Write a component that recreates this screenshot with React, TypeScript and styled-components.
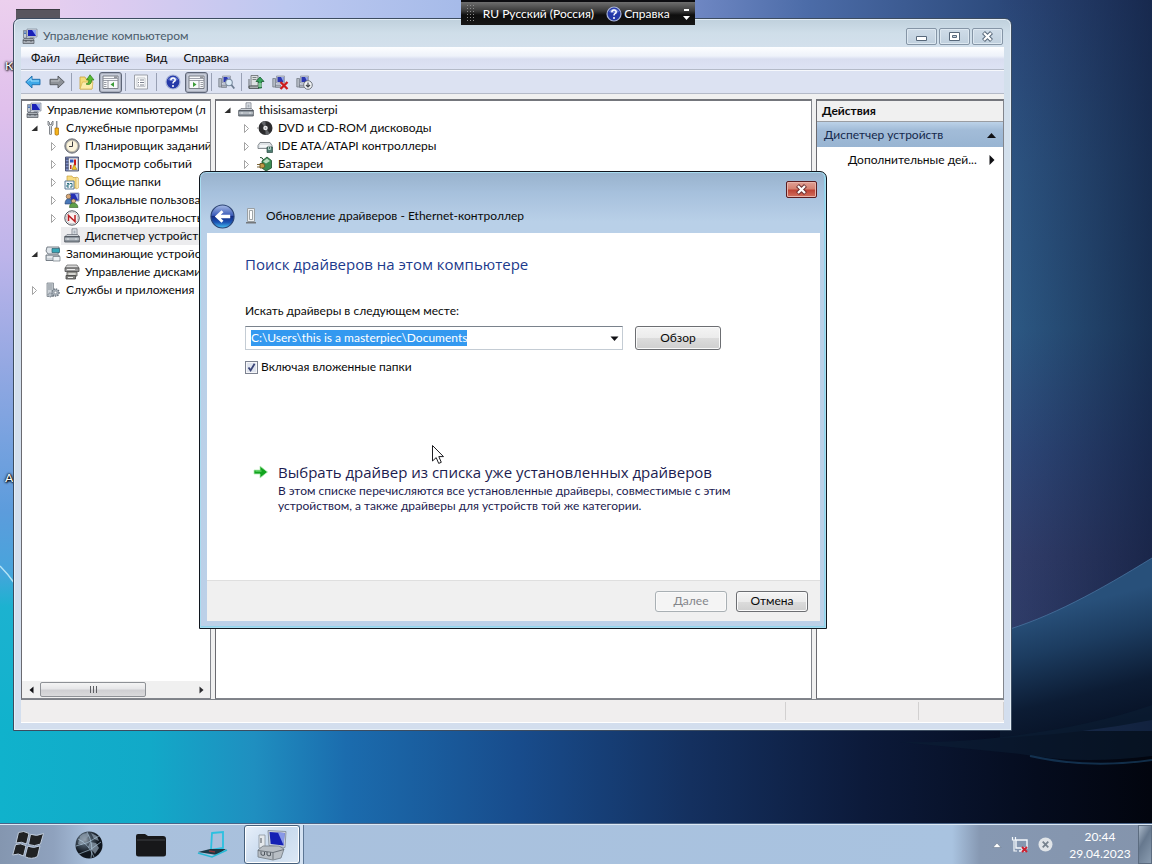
import React, { useEffect, useRef } from "react";
import styled, { createGlobalStyle, css } from "styled-components";

const GlobalStyle = createGlobalStyle`
  * { box-sizing: border-box; }
  html, body, #root { height: 100%; }
  body {
    margin: 0;
    overflow: hidden;
    font-family: Lato, "Open Sans", sans-serif;
    font-size: 12px;
    line-height: 16px;
    color: #0a0a0a;
  }
  button, input { font: inherit; color: inherit; margin: 0; }
  button { padding: 0; border: 0; background: none; }
  ul { list-style: none; margin: 0; padding: 0; }
  svg { display: block; flex: none; }
`;

/* ---------- desktop ---------- */

const Desktop = styled.div`
  position: relative;
  display: flex;
  flex-direction: column;
  justify-content: flex-end;
  height: 100vh;
  overflow: hidden;
`;

const WallpaperSvg = styled.svg`
  position: absolute;
  inset: 0;
  width: 100%;
  height: 100%;
`;

const DesktopLabel = styled.span<{ $top: number }>`
  position: absolute;
  left: 5px;
  top: ${(p) => p.$top}px;
  color: #fff;
  text-shadow: 0 0 2px #000, 1px 1px 2px #000, 0 0 3px #000;
`;

const DesktopThumb = styled.div`
  position: absolute;
  left: 16px;
  top: 9px;
  width: 44px;
  height: 20px;
  background: #58565e;
  border-top: 1px solid #3c3a42;
`;

function Wallpaper() {
  return (
    <WallpaperSvg viewBox="0 0 1152 864" preserveAspectRatio="none" aria-hidden="true">
      <defs>
        <linearGradient id="wpTop" x1="0" x2="1" y1="0" y2="0">
          <stop offset="0" stopColor="#ecd0ee" />
          <stop offset="0.1" stopColor="#dccbf0" />
          <stop offset="0.25" stopColor="#bcc8f0" />
          <stop offset="0.42" stopColor="#a3b9e8" />
          <stop offset="0.6" stopColor="#7088c4" />
          <stop offset="0.7" stopColor="#4c6ca8" />
          <stop offset="0.87" stopColor="#2c4a7c" />
          <stop offset="1" stopColor="#16264c" />
        </linearGradient>
        <linearGradient id="wpBottom" x1="0" x2="1" y1="0" y2="0">
          <stop offset="0" stopColor="#10b2cc" />
          <stop offset="0.13" stopColor="#12a9c8" />
          <stop offset="0.22" stopColor="#1f8fc0" />
          <stop offset="0.3" stopColor="#1b6cae" />
          <stop offset="0.45" stopColor="#184c8c" />
          <stop offset="0.6" stopColor="#14305f" />
          <stop offset="0.75" stopColor="#0c1a3a" />
          <stop offset="0.9" stopColor="#050c1e" />
          <stop offset="1" stopColor="#02050e" />
        </linearGradient>
        <linearGradient id="wpLeft" x1="0" x2="0" y1="0" y2="1">
          <stop offset="0" stopColor="#ecd0ee" />
          <stop offset="0.15" stopColor="#e0c0ec" />
          <stop offset="0.35" stopColor="#bdb4ea" />
          <stop offset="0.5" stopColor="#94a8e2" />
          <stop offset="0.7" stopColor="#5c9cdc" />
          <stop offset="0.78" stopColor="#48a4dc" />
          <stop offset="0.83" stopColor="#1cb2d0" />
          <stop offset="1" stopColor="#10b2cc" />
        </linearGradient>
        <linearGradient id="wpRight" x1="0" x2="0" y1="0" y2="1">
          <stop offset="0" stopColor="#2c487a" />
          <stop offset="0.22" stopColor="#2e5684" />
          <stop offset="0.45" stopColor="#2e5c88" />
          <stop offset="0.62" stopColor="#304a7c" />
          <stop offset="0.76" stopColor="#34406e" />
          <stop offset="1" stopColor="#2c3c68" />
        </linearGradient>
        <linearGradient id="wpShade" x1="0" x2="1" y1="0" y2="0">
          <stop offset="0" stopColor="#0c1836" stopOpacity="0" />
          <stop offset="1" stopColor="#0c1836" stopOpacity="0.65" />
        </linearGradient>
        <linearGradient id="wpCurve" x1="0.3" x2="0.45" y1="0.3" y2="1">
          <stop offset="0" stopColor="#28507a" />
          <stop offset="0.3" stopColor="#1c3c60" />
          <stop offset="0.7" stopColor="#0c1c34" />
          <stop offset="1" stopColor="#071226" />
        </linearGradient>
      </defs>
      <rect width="1152" height="400" fill="url(#wpTop)" />
      <rect y="700" width="1152" height="164" fill="url(#wpBottom)" />
      <rect width="60" y="0" height="731" fill="url(#wpLeft)" />
      <rect x="1000" width="152" height="731" fill="url(#wpRight)" />
      <rect x="1000" width="152" height="731" fill="url(#wpShade)" />
      <path d="M1000 632 C1050 618 1100 590 1152 558 V720 Q1080 734 1000 738 Z" fill="url(#wpCurve)" />
      <path d="M1000 632 C1050 618 1100 590 1152 558" fill="none" stroke="#4c78a4" strokeWidth="1" opacity=".7" />
      <path d="M900 742 C980 744 1080 730 1152 705 V756 Q1080 765 1020 754 Z" fill="#0c2036" opacity="0.5" />
      <path d="M1030 756 C1070 765 1110 766 1152 760" fill="none" stroke="#1d4a70" strokeWidth="2" opacity="0.6" />
      <path d="M0 566 Q8 574 15 584" fill="none" stroke="#b6e4f6" strokeWidth="1.5" />
    </WallpaperSvg>
  );
}

/* ---------- language bar ---------- */

const LangBar = styled.div`
  position: absolute;
  z-index: 3;
  left: 40%;
  top: 0;
  display: flex;
  align-items: center;
  width: 234px;
  height: 25px;
  padding: 0 4px 0 5px;
  color: #fff;
  background: linear-gradient(#6e6e6e 0, #3a3a3a 9px, #0e0e0e 13px, #161616 100%);
  border-top: 2px solid #0c0c10;
`;

const LangItem = styled.button<{ $push?: boolean }>`
  display: flex;
  align-items: center;
  gap: 2px;
  white-space: nowrap;
  margin-left: ${(p) => (p.$push ? "auto" : "0")};
`;

const LangGrip = styled.svg`
  margin-right: 8px;
`;

/* ---------- window frames ---------- */

const AppWindow = styled.main`
  position: absolute;
  z-index: 1;
  inset: 18px 140px 133px 13px;
  display: flex;
  flex-direction: column;
  padding: 0 7px 7px;
  border: 1px solid #3c4c60;
  border-radius: 7px 7px 0 0;
  background: linear-gradient(#bfd0dc 0, #cfdee9 14px, #d3e0ec 28px, #d3deee 100%);
  box-shadow: inset 0 0 0 1px #e4eef6;
`;

const TitleBar = styled.header`
  display: flex;
  align-items: center;
  height: 28px;
  padding: 6px 1px 0 1px;
  gap: 5px;
`;

const TitleText = styled.h1`
  flex: 1;
  margin: 0;
  font-size: 12px;
  line-height: 16px;
  font-weight: 400;
  color: #4b5c6b;
`;

const CaptionButtons = styled.div`
  display: flex;
  gap: 2px;
`;

const CaptionButton = styled.button<{ $danger?: boolean }>`
  display: grid;
  place-items: center;
  width: 31px;
  height: 17px;
  border: 1px solid #8595a6;
  border-radius: 2px;
  background: linear-gradient(#cfdce8, #c0d0de);
  box-shadow: inset 0 0 0 1px #dde8f1;
  ${(p) =>
    p.$danger &&
    css`
      border-color: #5a1c20;
      background: linear-gradient(#e0a095 0, #d4806f 7px, #bd4234 8px, #d2705e 100%);
      box-shadow: inset 0 0 0 1px #e8b4aa;
    `}
`;

const MenuBar = styled.nav`
  display: flex;
  align-items: center;
  gap: 16px;
  height: 23px;
  padding: 0 10px;
  background: linear-gradient(#fdfeff 0, #eef2fa 9px, #d9def0 12px, #dde3f4 100%);
  border-bottom: 1px solid #b4bac8;
`;

const ToolBar = styled.div`
  display: flex;
  align-items: center;
  gap: 1px;
  height: 24px;
  background: #dce2f2;
  border-top: 1px solid #f6f8fc;
  border-bottom: 1px solid #b4bac8;
`;

const ToolButton = styled.button<{ $pressed?: boolean }>`
  display: grid;
  place-items: center;
  width: 23px;
  height: 21px;
  border-radius: 3px;
  ${(p) =>
    p.$pressed &&
    css`
      border: 1px solid #5e6678;
      background: #c6cbd8;
      box-shadow: inset 0 0 0 1px #a8aebc;
    `}
`;

const ToolSeparator = styled.div<{ $wide?: boolean }>`
  width: ${(p) => (p.$wide ? 7 : 5)}px;
  height: 18px;
  background: linear-gradient(#98a0b4, #98a0b4) center / 1px 100% no-repeat;
`;

/* ---------- panes ---------- */

const Panes = styled.div`
  flex: 1;
  min-height: 0;
  display: grid;
  grid-template-columns: 190px minmax(0, 1fr) 188px;
  gap: 4px;
  padding-top: 5px;
  background: #f0f0f0;
`;

const Pane = styled.section`
  min-width: 0;
  display: flex;
  flex-direction: column;
  overflow: hidden;
  background: #fff;
  border: 1px solid #82858c;
  border-left-color: #6a6a70;
  border-top: 2px solid #74767c;
`;

const Tree = styled.ul`
  flex: 1;
  overflow: hidden;
`;

const TreeRow = styled.li<{ $indent: number; $selected?: boolean }>`
  display: flex;
  align-items: center;
  height: 18px;
  padding-left: ${(p) => p.$indent}px;
  white-space: nowrap;
  background: ${(p) =>
    p.$selected
      ? `linear-gradient(#ececee, #ececee) right / calc(100% - ${p.$indent + 12}px) 100% no-repeat`
      : "none"};
`;

const ArrowSlot = styled.span`
  width: 15px;
  flex: none;
`;

const RowText = styled.span`
  margin-left: 5px;
`;

const ScrollBar = styled.div`
  display: flex;
  align-items: center;
  height: 17px;
  background: #f0f0f0;
`;

const ScrollArrow = styled.button`
  display: grid;
  place-items: center;
  width: 18px;
  height: 17px;
`;

const ScrollTrack = styled.div`
  flex: 1;
  height: 15px;
`;

const ScrollThumb = styled.div`
  display: grid;
  place-items: center;
  width: 70%;
  height: 15px;
  border: 1px solid #8e9196;
  border-radius: 2px;
  background: linear-gradient(#f4f4f4 0, #e6e6e8 6px, #cfcfd2 7px, #dadadc 100%);
`;

const ActionsTitle = styled.h2`
  margin: 0;
  padding: 2px 5px;
  height: 21px;
  font-size: 12px;
  line-height: 16px;
  font-weight: 700;
  background: #f0f0f0;
  border-bottom: 1px solid #9a9da2;
`;

const ActionRow = styled.button<{ $group?: boolean }>`
  display: flex;
  align-items: center;
  justify-content: space-between;
  height: 25px;
  padding: 0 6px 0 ${(p) => (p.$group ? 7 : 31)}px;
  color: ${(p) => (p.$group ? "#14284c" : "#0a0a0a")};
  background: ${(p) => (p.$group ? "linear-gradient(#bcd2e8 0, #a2bcd8 8px, #98b4d2 100%)" : "none")};
  white-space: nowrap;
`;

const StatusBar = styled.footer`
  display: flex;
  height: 24px;
  border-top: 1px solid #7e8288;
  border-bottom: 1px solid #fff;
  background: #f0eeee;
`;

const StatusCell = styled.div<{ $width?: number }>`
  flex: ${(p) => (p.$width ? `0 0 ${p.$width}px` : "1")};
  border-right: 1px solid #d2d0d0;
  margin: 2px 0;
`;

/* ---------- dialog ---------- */

const Dialog = styled.section`
  position: absolute;
  z-index: 2;
  left: 199px;
  top: 171px;
  width: 628px;
  min-height: 458px;
  display: flex;
  flex-direction: column;
  padding: 0 6px 7px 7px;
  border: 1px solid #10161e;
  border-radius: 7px 7px 0 0;
  background: linear-gradient(#98b2cc 0, #a6c0dc 20px, #b9d0e8 50px, #bcd0e8 100%);
  box-shadow: inset 0 0 0 1px #a8dcf0, inset -1px -1px 0 1px #90d4ec;
`;

const DialogCaption = styled.div`
  display: flex;
  justify-content: flex-end;
  height: 29px;
  padding: 9px 3px 0 0;
`;

const DialogTitleRow = styled.header`
  display: flex;
  align-items: center;
  height: 32px;
  padding: 0 0 2px 3px;
`;

const DialogTitle = styled.h2`
  margin: 0 0 0 9px;
  font-size: 12px;
  line-height: 16px;
  font-weight: 400;
`;

const BackButton = styled.button`
  margin-right: 10px;
`;

const DialogBody = styled.div`
  flex: 1;
  padding: 20px 38px;
  background: #fff;
`;

const Heading = styled.h3`
  margin: 0 0 28px;
  font-family: "Open Sans", sans-serif;
  font-size: 15px;
  line-height: 22px;
  font-weight: 400;
  color: #1c3a8c;
`;

const FieldLabel = styled.label`
  display: block;
  margin-bottom: 7px;
`;

const FieldRow = styled.div`
  display: flex;
  align-items: flex-end;
  gap: 12px;
  margin-bottom: 9px;
`;

const Combo = styled.div`
  display: flex;
  align-items: center;
  width: 378px;
  height: 24px;
  border: 1px solid #c4ccd4;
  border-top-color: #7a828c;
  background: #fff;
`;

const ComboInput = styled.input`
  flex: 1;
  min-width: 0;
  height: 16px;
  padding: 0 0 0 5px;
  border: 0;
  outline: 0;
  background: transparent;
  &::selection { background: #3399f0; color: #fff; }
`;

const ComboButton = styled.button`
  display: grid;
  place-items: center;
  width: 16px;
  height: 20px;
`;

const PushButton = styled.button<{ $width: number; $height: number }>`
  width: ${(p) => p.$width}px;
  height: ${(p) => p.$height}px;
  border: 1px solid #6c6e72;
  border-radius: 3px;
  background: linear-gradient(#f4f4f4 0, #ebebeb 50%, #dcdcdc 51%, #cfcfcf 100%);
  box-shadow: inset 0 0 0 1px #fafafa;
  &:disabled {
    color: #83858a;
    border-color: #a9b0b4;
    background: #f4f4f4;
  }
`;

const CheckLabel = styled.label`
  display: flex;
  align-items: center;
  gap: 3px;
`;

const CheckBox = styled.input`
  appearance: none;
  width: 13px;
  height: 13px;
  border: 1px solid #7c8290;
  background: #e4e8f0;
  box-shadow: inset 0 0 0 1px #f6f6f8;
  &:checked {
    background: #dfe4ee
      url("data:image/svg+xml,%3Csvg xmlns='http://www.w3.org/2000/svg' viewBox='0 0 11 11'%3E%3Cpath d='M2.5 5.5 L4.6 8.4 L8.6 1.8' fill='none' stroke='%233a4478' stroke-width='1.8'/%3E%3C/svg%3E")
      center / 11px 11px no-repeat;
  }
`;

const CommandLink = styled.button`
  display: flex;
  gap: 9px;
  margin: 86px 0 0 8px;
  text-align: left;
  color: #1c1c50;
`;

const CommandTitle = styled.span`
  display: block;
  font-family: "Open Sans", sans-serif;
  font-size: 15px;
  line-height: 22px;
`;

const CommandText = styled.span`
  display: block;
  max-width: 470px;
  line-height: 15px;
`;

const CommandIcon = styled.span`
  padding-top: 4px;
`;

const DialogFooter = styled.footer`
  display: flex;
  align-items: center;
  justify-content: flex-end;
  gap: 9px;
  height: 41px;
  padding-right: 12px;
  background: #f0f0f0;
  border-top: 1px solid #dfdfdf;
`;

/* ---------- taskbar ---------- */

const Taskbar = styled.footer`
  position: relative;
  display: flex;
  align-items: stretch;
  height: 40px;
  border-top: 1px solid #dce8f4;
  box-shadow: 0 -1px 0 #4a6488;
  background: linear-gradient(90deg, #8496b0 0, #8fa2be 54px, #a9c0dc 90px, #a9c3e0 calc(100% - 200px), #8698b2 calc(100% - 172px), #8494ac 100%);
`;

const TaskButton = styled.button<{ $width: number; $active?: boolean }>`
  display: grid;
  place-items: center;
  width: ${(p) => p.$width}px;
  ${(p) =>
    p.$active &&
    css`
      border: 1px solid #46607c;
      border-radius: 3px;
      background: linear-gradient(135deg, #e8f0fa, #c8daee 50%, #dce8f5);
      box-shadow: inset 0 0 0 1px #fff;
    `}
`;

const StackEdge = styled.span`
  width: 4px;
  border-right: 1px solid #5c7694;
  background: #d4e2f2;
`;

const Tray = styled.div`
  display: flex;
  align-items: center;
  gap: 9px;
  margin-left: auto;
`;

const TrayButton = styled.button`
  display: block;
`;

const Clock = styled.time`
  width: 76px;
  text-align: center;
  line-height: 17px;
  color: #fff;
`;

const ShowDesktop = styled.button`
  width: 14px;
  border: 1px solid #5c6c80;
  background: linear-gradient(120deg, #aab8c8, #66788e 40%, #8a9cb0);
`;

/* ---------- icons ---------- */

const ComputerIcon = ({ size = 16 }: { size?: number }) => (
  <svg width={size} height={size} viewBox="0 0 16 16">
    <path d="M5 1h10v8H5z" fill="#d4d8e0" stroke="#7c869a" strokeWidth=".7" />
    <path d="M6 2h8v6H6z" fill="#1820b8" />
    <path d="M10 2h4v6z" fill="#8ea4f0" />
    <path d="M1.5 2.5h3V10h-3z" fill="#c4cad4" stroke="#6a7280" strokeWidth=".7" />
    <path d="M2 4h2M2 5.500h2" stroke="#2a60b0" strokeWidth=".8" />
    <path d="M8 9h4l1 2H7z" fill="#9aa2ae" />
    <path d="M2 10.500h9l1 1.500v3.500H1V12z" fill="#a8aeb6" stroke="#50565e" strokeWidth=".7" />
    <path d="M1 12.500h11M4 12v2M9 12v2" stroke="#50565e" strokeWidth=".8" />
  </svg>
);

const ToolsIcon = () => (
  <svg width="16" height="16" viewBox="0 0 16 16">
    <path d="M3 1v4l1.500 1.500V14q1 2 2 0V6.500L8 5V1L6.600 2.500v2H4.500v-2z" fill="#d4d8dc" stroke="#6a6e74" strokeWidth=".8" />
    <path d="M11.700 1v7" stroke="#8a8e94" strokeWidth="1.500" />
    <path d="M10 8h3.500v6.500q-1.700 1.500-3.500 0z" fill="#f4b41c" stroke="#a86c08" strokeWidth=".7" />
  </svg>
);

const ClockIcon = () => (
  <svg width="16" height="16" viewBox="0 0 16 16">
    <circle cx="8" cy="8" r="7.200" fill="#9a9ca0" stroke="#5c5e64" strokeWidth=".8" />
    <circle cx="8" cy="8" r="5.600" fill="#fbf4dc" stroke="#c8c0a4" strokeWidth=".5" />
    <path d="M8.500 3.500V8.500H5" fill="none" stroke="#3c3c40" />
  </svg>
);

const EventIcon = () => (
  <svg width="16" height="16" viewBox="0 0 16 16">
    <path d="M1.500 1h13v14h-13z" fill="#8090c8" stroke="#39405c" strokeWidth=".8" />
    <path d="M4.500 2h9.500v12.500H4.500z" fill="#f0f0f4" stroke="#6c7084" strokeWidth=".6" />
    <path d="M1.500 3h3M1.500 6h3M1.500 9h3M1.500 12h3" stroke="#303858" />
    <path d="M6 3.500h3.500v3H6z" fill="#3058c0" />
    <path d="M11 3.500v6" stroke="#cc1c18" strokeWidth="2" />
    <path d="M8 13.500l2-5 3 5z" fill="#f4c41c" stroke="#8a6a10" strokeWidth=".5" />
    <path d="M6 9h1.500v4H6z" fill="#c03020" />
  </svg>
);

const SharedFolderIcon = () => (
  <svg width="16" height="16" viewBox="0 0 16 16">
    <path d="M3 2h5l1 1.500h4.500V14H3z" fill="#f8dc80" stroke="#c8a040" strokeWidth=".7" />
    <path d="M12 3l2.500 1V14l-2.500 1z" fill="#fceab0" stroke="#c8a040" strokeWidth=".5" />
    <path d="M1 7h9v8H1z" fill="#f0f4f8" stroke="#4c7090" strokeWidth=".9" />
    <path d="M3 9.500h2v1.500H3v2h2M6 9.500h2v3.500H6" fill="none" stroke="#2a7080" />
  </svg>
);

const UsersIcon = () => (
  <svg width="16" height="16" viewBox="0 0 16 16">
    <path d="M6 1h9v8H6z" fill="#2430b4" stroke="#a0a8bc" />
    <path d="M11 2h3v6z" fill="#98acf0" />
    <circle cx="4.500" cy="4.500" r="2.300" fill="#d8a878" stroke="#5c4830" strokeWidth=".6" />
    <path d="M1 12q0-5 3.500-5T8 12z" fill="#4878b8" stroke="#28406c" strokeWidth=".6" />
    <circle cx="9.500" cy="9" r="2.100" fill="#e0b488" stroke="#5c4830" strokeWidth=".6" />
    <path d="M5.500 15.500q0-4.500 4-4.500t4.500 4.500z" fill="#60a048" stroke="#305c24" strokeWidth=".6" />
  </svg>
);

const PerfIcon = () => (
  <svg width="16" height="16" viewBox="0 0 16 16">
    <circle cx="8" cy="8" r="7.200" fill="#fff" stroke="#4c5058" strokeWidth="1" />
    <circle cx="8" cy="8" r="5.800" fill="#fbf0f0" stroke="#a8acb0" strokeWidth=".6" />
    <path d="M4.500 11V5.500L11 11.500V5" fill="none" stroke="#b81c20" strokeWidth="1.500" />
  </svg>
);

const DeviceIcon = () => (
  <svg width="16" height="16" viewBox="0 0 16 16">
    <path d="M8 .8h5V7H8z" fill="#e4e8ec" stroke="#7c828a" strokeWidth=".8" />
    <path d="M9.500 2.500h2v3h-2z" fill="#a8b0ba" />
    <path d="M1 8.500l2-2h10.500l2 2z" fill="#cdd2d8" stroke="#6a7078" strokeWidth=".7" />
    <path d="M.7 8.500h14.600V14H.7z" fill="#8d959e" stroke="#484e56" strokeWidth=".8" />
    <path d="M1 11h14M4 10v2M12 10v2" stroke="#dde2e6" />
  </svg>
);

const StorageIcon = () => (
  <svg width="16" height="16" viewBox="0 0 16 16">
    <path d="M2 1h12v4l-1 3H3L1 5z" fill="#dfe5ea" stroke="#5c656e" strokeWidth=".8" />
    <path d="M7 2.500h7.500v4H7z" fill="#38a8b8" stroke="#2a6070" strokeWidth=".7" />
    <path d="M1 9h13v5.500H1z" fill="#c9d0d6" stroke="#5c656e" strokeWidth=".8" />
    <path d="M2 11h6" stroke="#fff" />
    <path d="M8 10.500h7v4.500H8z" fill="#eef2f5" stroke="#6c757e" strokeWidth=".7" />
  </svg>
);

const DisksIcon = () => (
  <svg width="16" height="16" viewBox="0 0 16 16">
    <path d="M3 1h10l2 3H1z" fill="#d8d8d8" stroke="#5c5c5c" strokeWidth=".7" />
    <path d="M1 4h14v3.500H1z" fill="#9c9c9c" stroke="#4c4c4c" strokeWidth=".8" />
    <path d="M3 8h10v4H3z" fill="#c0c0b8" stroke="#4c4c4c" strokeWidth=".8" />
    <path d="M2 11.500h9.500V15H2z" fill="#80807c" stroke="#444" strokeWidth=".8" />
    <path d="M3 5.500h8M5 10h6M4 13.500h5" stroke="#ececec" />
  </svg>
);

const ServicesIcon = () => (
  <svg width="16" height="16" viewBox="0 0 16 16">
    <path d="M2 1h6.500v13.500H2z" fill="#ccd2d8" stroke="#7c848c" strokeWidth=".8" />
    <path d="M3 3h4.500M3 5h4.500M3 7h4.500" stroke="#7c848c" strokeWidth=".8" />
    <circle cx="10.500" cy="10.500" r="3.600" fill="#a8b0b8" stroke="#6c7680" strokeDasharray="1.400 1" strokeWidth="1.400" />
    <circle cx="10.500" cy="10.500" r="1.300" fill="#fff" stroke="#6c7680" strokeWidth=".5" />
    <circle cx="5" cy="13" r="2" fill="#b8c0c8" stroke="#6c7680" strokeDasharray="1 .8" />
  </svg>
);

const DiscIcon = () => (
  <svg width="16" height="16" viewBox="0 0 16 16">
    <path d="M0 8h1" stroke="#888" />
    <circle cx="8.500" cy="8" r="7" fill="#2c2c2e" />
    <path d="M8.500 8L4 2.600A7 7 0 0 1 8.500 1zM8.500 8l4.500 5.400A7 7 0 0 1 8.500 15z" fill="#626468" />
    <circle cx="8.500" cy="8" r="2.300" fill="#e8e8ea" />
    <circle cx="8.500" cy="8" r=".8" fill="#8c8c90" />
  </svg>
);

const IdeIcon = () => (
  <svg width="16" height="16" viewBox="0 0 16 16">
    <path d="M3 4.500h10l2 3v3H1v-3z" fill="#dfe3e6" stroke="#7c8288" strokeWidth=".9" />
    <path d="M3 8h8" stroke="#fff" strokeWidth="1.400" />
    <path d="M10 9h5.500v5.500H10z" fill="#4e7c70" stroke="#2c4c44" strokeWidth=".7" />
    <path d="M11.500 9v2.500h2V9" fill="none" stroke="#c8e0d8" strokeWidth=".8" />
  </svg>
);

const BatteryIcon = () => (
  <svg width="16" height="16" viewBox="0 0 16 16">
    <path d="M5 5l5-4 4.500 3.500V12L9 15l-4-3z" fill="#3c8c54" stroke="#1c4c2c" strokeWidth=".8" />
    <path d="M6 5.500l4-3 3 2.500-4 2.500z" fill="#b8dcc0" />
    <path d="M3 1.500Q5.500 1 6.500 4" fill="none" stroke="#1c4c2c" />
    <path d="M0 8.500h3M0 11h3M3 7.500h3.500l1.500 2.500-1.500 2H3z" fill="#c09a48" stroke="#6c5420" strokeWidth=".9" />
  </svg>
);

const ArrowIcon = ({ forward }: { forward?: boolean }) => (
  <svg width="16" height="16" viewBox="0 0 16 16">
    <path
      d={forward ? "M15.300 8L9 2v3.300H1v5.400h8V14z" : "M.7 8L7 2v3.300h8v5.400H7V14z"}
      fill={forward ? "#8e9298" : "#3ca8e8"}
      stroke={forward ? "#54585e" : "#1c6cac"}
      strokeWidth=".9"
    />
    <path d={forward ? "M2 7h8V4.500" : "M14 7H6V4.500L3 7.500"} fill="none" stroke={forward ? "#bcc0c4" : "#a4e0fc"} />
  </svg>
);

const UpFolderIcon = () => (
  <svg width="16" height="16" viewBox="0 0 16 16">
    <path d="M1 3h5l1 2h6v10H1z" fill="#f6dc7c" stroke="#c8a23c" strokeWidth=".8" />
    <path d="M1 15L3.500 8H14l-1 7z" fill="#fcecac" stroke="#d0ac48" strokeWidth=".6" />
    <path d="M7 10q3 0 3-4H7.500L11 .8 15 6h-2.500q0 6-5.500 4z" fill="#58bc34" stroke="#2c7c18" strokeWidth=".7" />
  </svg>
);

const PaneIcon = ({ right }: { right?: boolean }) => (
  <svg width="17" height="16" viewBox="0 0 17 16">
    <path d="M1 2h15v12.500H1z" fill="#f8f9fb" stroke="#70747e" strokeWidth=".9" />
    <path d="M1 4.500h15M1 6.500h15" stroke="#888c98" strokeWidth=".8" />
    <path d="M12 3.200h3" stroke="#40444e" strokeWidth=".8" />
    {right ? (
      <>
        <path d="M11 6.500v8M12.500 8.500h2.500M12.500 10.500h2.500M12.500 12.500h2.500" stroke="#80848e" strokeWidth=".8" />
        <path d="M5 8l3.500 2.500L5 13z" fill="#3c9c38" />
      </>
    ) : (
      <>
        <path d="M6 6.500v8M2 8.500h2.500M2 10.500h2.500M2 12.500h2.500" stroke="#80848e" strokeWidth=".8" />
        <path d="M12 8l-3.500 2.500L12 13z" fill="#3c9c38" />
      </>
    )}
  </svg>
);

const ListIcon = () => (
  <svg width="16" height="16" viewBox="0 0 16 16">
    <path d="M1.500 1h13v14h-13z" fill="#f6f7f9" stroke="#9498a2" strokeWidth=".9" />
    <path d="M4 4h8v8.500H4z" fill="#fff" stroke="#b0b4bc" strokeWidth=".7" />
    <path d="M5 6h1M5 8.500h1M5 11h1M7 6h4M7 8.500h4M7 11h4" stroke="#6c7280" strokeWidth=".9" />
  </svg>
);

const HelpIcon = () => (
  <svg width="16" height="16" viewBox="0 0 16 16">
    <circle cx="8" cy="8" r="7" fill="#2438a8" stroke="#a8b4d8" strokeWidth="1.200" />
    <path d="M3 6a5.500 5.500 0 0 1 10 0q-5 2-10 0z" fill="#6478d0" />
    <path d="M5.800 6.200Q6 4 8 4t2.200 1.900Q10.200 7 8.900 7.700 8 8.200 8 9.600" fill="none" stroke="#fff" strokeWidth="1.500" />
    <circle cx="8" cy="11.900" r="1" fill="#fff" />
  </svg>
);

const ScanIcon = ({ badge }: { badge?: "cross" | "down" }) => (
  <svg width="17" height="16" viewBox="0 0 17 16">
    <path d="M4.500 2h8v7h-8z" fill="#c8ccd8" stroke="#888e9c" strokeWidth=".7" />
    <path d="M5.500 3h6v5h-6z" fill="#2c38b0" />
    <path d="M9 3h2.500v5z" fill="#98a8e8" />
    <path d="M.8 4.500h2.700V13H.8z" fill="#b4bac4" stroke="#6c727e" strokeWidth=".7" />
    <path d="M3.500 11h5v2.500h-5z" fill="#a8aeb8" stroke="#6c727e" strokeWidth=".6" />
    {badge === "cross" && <path d="M8.500 8l7 7M15.500 8l-7 7" stroke="#cc1c1c" strokeWidth="2.300" />}
    {badge === "down" && (
      <>
        <circle cx="12" cy="11" r="4.300" fill="#f0f2f4" stroke="#70767e" />
        <path d="M12 8.500v4M10 11l2 2 2-2" fill="none" stroke="#44484e" strokeWidth="1.200" />
      </>
    )}
    {!badge && (
      <>
        <circle cx="11" cy="8.500" r="3.300" fill="#dcecf8" stroke="#7c8ca0" strokeWidth="1.100" />
        <path d="M13.500 11l2.800 3.500" stroke="#6c7c90" strokeWidth="1.800" />
      </>
    )}
  </svg>
);

const UpdateIcon = () => (
  <svg width="17" height="16" viewBox="0 0 17 16">
    <path d="M3 1.500h7V12H3z" fill="#dce0e2" stroke="#646a6c" strokeWidth=".8" />
    <path d="M4.500 3.500h4M4.500 5.500h4" stroke="#646a6c" strokeWidth=".8" />
    <path d="M1 12h10v2.500H1zM1 5v9" fill="#a8aeb0" stroke="#54595c" strokeWidth=".9" />
    <path d="M10.500 14V7.500H8L12 3l4 4.500h-2.500V14z" fill="#38a45c" stroke="#185c30" strokeWidth=".8" />
    <path d="M10 10h4M10 12h4" stroke="#d4ecd8" strokeWidth=".9" />
  </svg>
);

const TreeArrow = ({ open }: { open: boolean }) => (
  <svg width="9" height="10" viewBox="0 0 9 10">
    {open ? (
      <path d="M7.500 2.500v5.500H1.500z" fill="#2c2c2c" />
    ) : (
      <path d="M2.500 1.500l4 4-4 4z" fill="#fff" stroke="#9a9a9a" strokeWidth=".9" />
    )}
  </svg>
);

const CloseGlyph = ({ stroke }: { stroke: string }) => (
  <svg width="13" height="11" viewBox="0 0 13 11">
    <path d="M2.500 1.500l8 8M10.500 1.500l-8 8" stroke={stroke} strokeWidth="4.200" />
    <path d="M3 2l7 7M10 2l-7 7" stroke="#fff" strokeWidth="2.200" />
  </svg>
);

const Triangle = ({ dir }: { dir: "up" | "down" | "left" | "right" }) => {
  const d = {
    up: "M1 8l4.500-5L10 8z",
    down: "M1.500 3.500h8L5.500 8z",
    left: "M7.500 1.500v7L3.500 5z",
    right: "M3.500 0l5 5-5 5z",
  }[dir];
  return (
    <svg width="11" height="10" viewBox="0 0 11 10">
      <path d={d} fill="#101014" />
    </svg>
  );
};

const BackIcon = () => (
  <svg width="25" height="25" viewBox="0 0 26 26">
    <defs>
      <linearGradient id="backFill" x1="0" x2="0" y1="0" y2="1">
        <stop offset="0" stopColor="#a8bce8" />
        <stop offset="0.45" stopColor="#3c5cb8" />
        <stop offset="0.5" stopColor="#142c84" />
        <stop offset="0.75" stopColor="#1c54b4" />
        <stop offset="1" stopColor="#48c4f4" />
      </linearGradient>
    </defs>
    <circle cx="13" cy="13" r="12" fill="url(#backFill)" stroke="#2c4474" strokeWidth="1.200" />
    <path d="M5 13l7-6.500 2 2-2.800 2.800H21v3.400h-9.800l2.800 2.800-2 2z" fill="#fff" />
  </svg>
);

const NicIcon = () => (
  <svg width="12" height="18" viewBox="0 0 12 18">
    <path d="M2.500 1.500h7v13h-7z" fill="#eceff0" stroke="#9aa0a4" />
    <path d="M4.500 3.500h3v9h-3z" fill="#fff" stroke="#8a9094" strokeWidth=".8" />
    <path d="M1 15h10v1.500H1z" fill="#74787c" />
  </svg>
);

const GreenArrow = () => (
  <svg width="16" height="14" viewBox="0 0 16 14">
    <path d="M1 5h6V1L14.500 7 7 13V9H1z" fill="#12a41e" stroke="#b8ecb8" strokeWidth=".8" />
    <path d="M2.500 6h6" stroke="#80e484" />
  </svg>
);

const WindowsLogo = () => (
  <svg width="34" height="30" viewBox="0 0 34 30">
    <g fill="#202224" stroke="#c0ccdc" strokeWidth="1">
      <path d="M6.500 2.500q5-2.500 10.500 1L14.500 14q-5-3-10.500-1z" />
      <path d="M18.500 4.300q6 2.500 13-.8L28.500 14q-6 3-12 .5z" />
      <path d="M3.500 14.700q5-2.200 10.500 1L11.500 26q-5-3.500-10.800-1z" />
      <path d="M15.700 16.200q6 2.500 12.300-.3L25.500 26.500q-6 3.500-12.500.2z" />
    </g>
  </svg>
);

const GlobeIcon = () => (
  <svg width="30" height="30" viewBox="0 0 30 30">
    <defs>
      <radialGradient id="globeFill" cx=".35" cy=".3">
        <stop offset="0" stopColor="#98a4b0" />
        <stop offset=".45" stopColor="#465462" />
        <stop offset="1" stopColor="#10161e" />
      </radialGradient>
    </defs>
    <circle cx="15" cy="15" r="13.500" fill="url(#globeFill)" />
    <path d="M6 6q3-3 7-3l2 3-4 4-3 5-4-1zM17 3l6 3 2 5-5-2zM16 12l6 1 3 5-4 6-3-4-4-3z" fill="#8c9cac" opacity=".75" />
    <path d="M2 16q12-2 23-10M5 24q12-3 22-12M13 2q7 12 4 26M4 9q10 4 16 18" fill="none" stroke="#b8d4e8" strokeWidth=".6" />
  </svg>
);

const FolderIcon = () => (
  <svg width="32" height="26" viewBox="0 0 32 26">
    <path d="M1 4q0-2 2-2h7l3 2h15q3 0 3 3v15q0 2.500-2.500 2.500h-25Q1 24.500 1 22z" fill="#17181a" />
    <path d="M2 8h28" stroke="#3e4144" />
  </svg>
);

const NotebookIcon = () => (
  <svg width="32" height="30" viewBox="0 0 32 30">
    <path d="M15 3l11-1v16l-12 2zM15 3L14 20" fill="none" stroke="#2cc0e0" strokeWidth="1.800" />
    <path d="M1 22l12-3h16l-9 6z" fill="#1c3844" />
    <path d="M1 23l14 4 15-7" fill="none" stroke="#28b8d4" strokeWidth="1.600" />
    <path d="M12 21l6 1" stroke="#8c3438" strokeWidth="1.500" />
  </svg>
);

const ManagementIcon = () => (
  <svg width="32" height="32" viewBox="0 0 32 32">
    <path d="M12 1.500l18 1-1 16-16-2z" fill="#d0d6de" stroke="#7c8694" strokeWidth=".8" />
    <path d="M13.500 3l15 1-.8 12.500-13-1.500z" fill="#1420b4" />
    <path d="M22 3.600l6.500.4-.8 12.500z" fill="#8898e8" />
    <path d="M3 6h6v13H3z" fill="#e4e8ec" stroke="#8c949e" strokeWidth=".8" />
    <path d="M5 9v5" stroke="#50565e" />
    <path d="M2 21l5-4h16l5 3-3 9-8 2-15-3z" fill="#b8bec4" stroke="#7c848c" strokeWidth=".9" />
    <path d="M2 21.500l15 2 11-3M17 23.500v7" fill="none" stroke="#6c747c" />
    <path d="M5 22.500v3q2 1.500 3.500.500v-3M11 23v3q2 1.500 3.500.500v-3" fill="none" stroke="#4c545c" />
  </svg>
);

const NetworkIcon = () => (
  <svg width="18" height="18" viewBox="0 0 18 18">
    <path d="M5 4h11v8H5zM8 15h7M11 12v3" fill="none" stroke="#f4f8fc" strokeWidth="1.400" />
    <path d="M1.500 1v3h3V1M3 4v11h3" fill="none" stroke="#f4f8fc" strokeWidth="1.200" />
    <path d="M11 11l5 5M16 11l-5 5" stroke="#cc2030" strokeWidth="2" />
  </svg>
);

const StatusCrossIcon = () => (
  <svg width="15" height="15" viewBox="0 0 15 15">
    <circle cx="7.500" cy="7.500" r="7" fill="#e0e4e8" />
    <path d="M4.700 4.700l5.600 5.600M10.300 4.700l-5.600 5.600" stroke="#76828e" strokeWidth="1.800" />
  </svg>
);

const CursorSvg = styled.svg`
  position: absolute;
  z-index: 4;
  left: 431px;
  top: 444px;
`;

/* ---------- data ---------- */

type Node = {
  text: string;
  icon: React.ReactNode;
  indent: number;
  open?: boolean;
  leaf?: boolean;
  root?: boolean;
  selected?: boolean;
};

const consoleTree: Node[] = [
  { text: "Управление компьютером (л", icon: <ComputerIcon />, indent: 4, root: true },
  { text: "Служебные программы", icon: <ToolsIcon />, indent: 8, open: true },
  { text: "Планировщик заданий", icon: <ClockIcon />, indent: 27 },
  { text: "Просмотр событий", icon: <EventIcon />, indent: 27 },
  { text: "Общие папки", icon: <SharedFolderIcon />, indent: 27 },
  { text: "Локальные пользова", icon: <UsersIcon />, indent: 27 },
  { text: "Производительность", icon: <PerfIcon />, indent: 27 },
  { text: "Диспетчер устройств", icon: <DeviceIcon />, indent: 27, leaf: true, selected: true },
  { text: "Запоминающие устройс", icon: <StorageIcon />, indent: 8, open: true },
  { text: "Управление дисками", icon: <DisksIcon />, indent: 27, leaf: true },
  { text: "Службы и приложения", icon: <ServicesIcon />, indent: 8 },
];

const deviceTree: Node[] = [
  { text: "thisisamasterpi", icon: <DeviceIcon />, indent: 7, open: true },
  { text: "DVD и CD-ROM дисководы", icon: <DiscIcon />, indent: 26 },
  { text: "IDE ATA/ATAPI контроллеры", icon: <IdeIcon />, indent: 26 },
  { text: "Батареи", icon: <BatteryIcon />, indent: 26 },
];

function TreeView({ label, nodes }: { label: string; nodes: Node[] }) {
  return (
    <Tree role="tree" aria-label={label}>
      {nodes.map((n) => (
        <TreeRow key={n.text} role="treeitem" aria-selected={!!n.selected} $indent={n.indent} $selected={n.selected}>
          {!n.root && <ArrowSlot>{!n.leaf && <TreeArrow open={!!n.open} />}</ArrowSlot>}
          {n.icon}
          <RowText>{n.text}</RowText>
        </TreeRow>
      ))}
    </Tree>
  );
}

function DriverDialog() {
  const path = useRef<HTMLInputElement>(null);
  useEffect(() => {
    path.current?.focus();
    path.current?.select();
  }, []);
  return (
    <Dialog role="dialog" aria-labelledby="driver-title">
      <DialogCaption>
        <CaptionButton $danger aria-label="Закрыть">
          <CloseGlyph stroke="#6c3030" />
        </CaptionButton>
      </DialogCaption>
      <DialogTitleRow>
        <BackButton aria-label="Назад">
          <BackIcon />
        </BackButton>
        <NicIcon />
        <DialogTitle id="driver-title">Обновление драйверов - Ethernet-контроллер</DialogTitle>
      </DialogTitleRow>
      <DialogBody>
        <Heading>Поиск драйверов на этом компьютере</Heading>
        <FieldLabel htmlFor="driver-path">Искать драйверы в следующем месте:</FieldLabel>
        <FieldRow>
          <Combo>
            <ComboInput
              ref={path}
              id="driver-path"
              type="text"
              spellCheck={false}
              defaultValue="C:\Users\this is a masterpiec\Documents"
            />
            <ComboButton aria-label="Показать список">
              <Triangle dir="down" />
            </ComboButton>
          </Combo>
          <PushButton $width={86} $height={24}>Обзор</PushButton>
        </FieldRow>
        <CheckLabel>
          <CheckBox type="checkbox" defaultChecked />
          Включая вложенные папки
        </CheckLabel>
        <CommandLink>
          <CommandIcon>
            <GreenArrow />
          </CommandIcon>
          <span>
            <CommandTitle>Выбрать драйвер из списка уже установленных драйверов</CommandTitle>
            <CommandText>
              В этом списке перечисляются все установленные драйверы, совместимые с этим устройством, а также драйверы
              для устройств той же категории.
            </CommandText>
          </span>
        </CommandLink>
      </DialogBody>
      <DialogFooter>
        <PushButton $width={72} $height={21} disabled>Далее</PushButton>
        <PushButton $width={72} $height={21}>Отмена</PushButton>
      </DialogFooter>
    </Dialog>
  );
}

export default function App() {
  return (
    <>
      <GlobalStyle />
      <Desktop>
        <Wallpaper />
        <DesktopThumb />
        <DesktopLabel $top={58}>К</DesktopLabel>
        <DesktopLabel $top={470}>A</DesktopLabel>

        <AppWindow>
          <TitleBar>
            <ComputerIcon />
            <TitleText>Управление компьютером</TitleText>
            <CaptionButtons>
              <CaptionButton aria-label="Свернуть">
                <svg width="13" height="11" viewBox="0 0 13 11">
                  <path d="M1.500 5.500h10v4h-10z" fill="#fff" stroke="#58687a" />
                </svg>
              </CaptionButton>
              <CaptionButton aria-label="Развернуть">
                <svg width="13" height="11" viewBox="0 0 13 11">
                  <path d="M1.500 1.500h10v8h-10z" fill="#fff" stroke="#58687a" />
                  <path d="M4.500 4.500h4v2h-4z" fill="#c8d4e0" stroke="#58687a" />
                </svg>
              </CaptionButton>
              <CaptionButton aria-label="Закрыть">
                <CloseGlyph stroke="#58687a" />
              </CaptionButton>
            </CaptionButtons>
          </TitleBar>
          <MenuBar>
            <button>Файл</button>
            <button>Действие</button>
            <button>Вид</button>
            <button>Справка</button>
          </MenuBar>
          <ToolBar>
            <ToolButton aria-label="Назад"><ArrowIcon /></ToolButton>
            <ToolButton aria-label="Вперед"><ArrowIcon forward /></ToolButton>
            <ToolSeparator />
            <ToolButton aria-label="Вверх"><UpFolderIcon /></ToolButton>
            <ToolButton $pressed aria-label="Дерево консоли"><PaneIcon /></ToolButton>
            <ToolSeparator />
            <ToolButton aria-label="Свойства"><ListIcon /></ToolButton>
            <ToolSeparator $wide />
            <ToolButton aria-label="Справка"><HelpIcon /></ToolButton>
            <ToolButton $pressed aria-label="Панель действий"><PaneIcon right /></ToolButton>
            <ToolSeparator />
            <ToolButton aria-label="Обновить конфигурацию"><ScanIcon /></ToolButton>
            <ToolSeparator />
            <ToolButton aria-label="Обновить драйверы"><UpdateIcon /></ToolButton>
            <ToolButton aria-label="Удалить"><ScanIcon badge="cross" /></ToolButton>
            <ToolButton aria-label="Отключить"><ScanIcon badge="down" /></ToolButton>
          </ToolBar>
          <Panes>
            <Pane>
              <TreeView label="Дерево консоли" nodes={consoleTree} />
              <ScrollBar>
                <ScrollArrow aria-label="Влево"><Triangle dir="left" /></ScrollArrow>
                <ScrollTrack>
                  <ScrollThumb>
                    <svg width="9" height="7" viewBox="0 0 9 7">
                      <path d="M1.500 0v7M4.500 0v7M7.500 0v7" stroke="#5c5e62" />
                    </svg>
                  </ScrollThumb>
                </ScrollTrack>
                <ScrollArrow aria-label="Вправо">
                  <svg width="11" height="10" viewBox="0 0 11 10">
                    <path d="M3.500 1.500v7L7.500 5z" fill="#2c2c30" />
                  </svg>
                </ScrollArrow>
              </ScrollBar>
            </Pane>
            <Pane>
              <TreeView label="Устройства" nodes={deviceTree} />
            </Pane>
            <Pane>
              <ActionsTitle>Действия</ActionsTitle>
              <ActionRow $group>
                Диспетчер устройств <Triangle dir="up" />
              </ActionRow>
              <ActionRow>
                Дополнительные дей... <Triangle dir="right" />
              </ActionRow>
            </Pane>
          </Panes>
          <StatusBar>
            <StatusCell />
            <StatusCell $width={133} />
            <StatusCell $width={85} />
          </StatusBar>
        </AppWindow>

        <DriverDialog />

        <LangBar>
          <LangGrip width="9" height="19" viewBox="0 0 9 19">
            <path d="M1.500 1v17M4.500 1v17M7.500 1v17" stroke="#8c8c8c" strokeDasharray="1 2" />
          </LangGrip>
          <LangItem>RU Русский (Россия)</LangItem>
          <LangItem $push><HelpIcon />Справка</LangItem>
          <LangItem $push aria-label="Параметры">
            <svg width="9" height="14" viewBox="0 0 9 14">
              <path d="M2 2h5v2H2zM1 9h7l-3.500 4z" fill="#fff" />
            </svg>
          </LangItem>
        </LangBar>

        <CursorSvg width="14" height="22" viewBox="0 0 14 22">
          <path d="M1.500 1.500v15.500l3.700-3.400 2.500 5.800 2.600-1.100-2.500-5.700h4.700z" fill="#fff" stroke="#1c1c20" />
        </CursorSvg>

        <Taskbar>
          <TaskButton $width={58} aria-label="Пуск"><WindowsLogo /></TaskButton>
          <TaskButton $width={62} aria-label="Браузер"><GlobeIcon /></TaskButton>
          <TaskButton $width={62} aria-label="Проводник"><FolderIcon /></TaskButton>
          <TaskButton $width={62} aria-label="Компьютер"><NotebookIcon /></TaskButton>
          <TaskButton $width={56} $active aria-label="Управление компьютером"><ManagementIcon /></TaskButton>
          <StackEdge />
          <Tray>
            <TrayButton aria-label="Скрытые значки">
              <svg width="10" height="6" viewBox="0 0 10 6">
                <path d="M1 5.500L5 1l4 4.500z" fill="#fff" stroke="#5c6c80" strokeWidth=".5" />
              </svg>
            </TrayButton>
            <TrayButton aria-label="Сеть"><NetworkIcon /></TrayButton>
            <TrayButton aria-label="Звук"><StatusCrossIcon /></TrayButton>
            <Clock dateTime="2023-04-29T20:44">
              20:44
              <br />
              29.04.2023
            </Clock>
          </Tray>
          <ShowDesktop aria-label="Показать рабочий стол" />
        </Taskbar>
      </Desktop>
    </>
  );
}
